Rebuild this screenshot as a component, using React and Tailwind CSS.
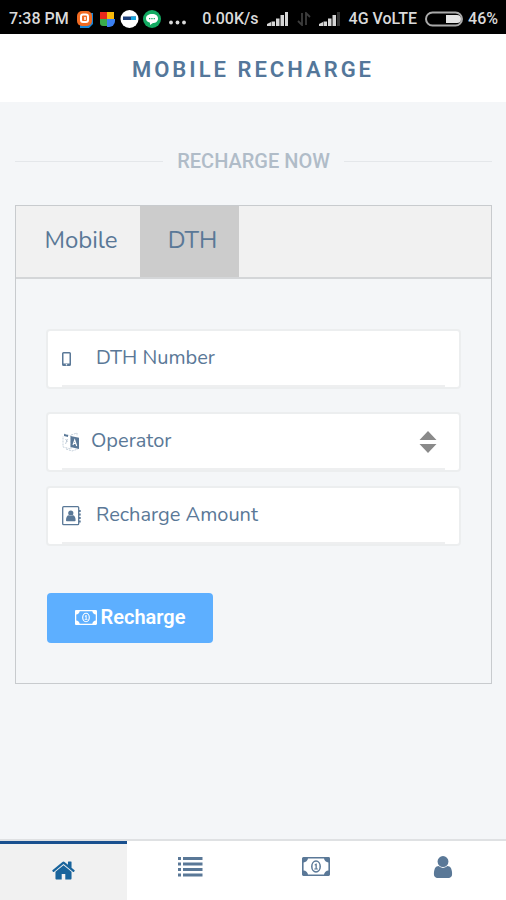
import React from "react";

const HomeIcon = () => (
  <svg viewBox="0 0 1792 1792" className="h-[25px] w-[25px] fill-current" aria-hidden="true">
    <path d="M1472 992v480q0 26-19 45t-45 19h-384v-384h-256v384h-384q-26 0-45-19t-19-45v-480q0-1 .5-3t.5-3l575-474 575 474q1 2 1 6zm223-69l-62 74q-8 9-21 11h-3q-13 0-21-7l-692-577-692 577q-12 8-24 7-13-2-21-11l-62-74q-8-10-7-23.5t11-21.5l719-599q32-26 76-26t76 26l244 204v-195q0-14 9-23t23-9h192q14 0 23 9t9 23v408l219 182q10 8 11 21.5t-7 23.5z" />
  </svg>
);

const ListIcon = () => (
  <svg viewBox="0 0 26 22" className="h-[22px] w-[26px] fill-current" aria-hidden="true">
    {[1, 6.5, 12, 17.5].map((y) => (
      <g key={y}>
        <rect x="1" y={y} width="3" height="3" />
        <rect x="6" y={y} width="19.5" height="3" />
      </g>
    ))}
  </svg>
);

const MoneyIcon = ({ className }) => (
  <svg viewBox="0 0 28 19" className={className} aria-hidden="true">
    <rect x="0.8" y="0.8" width="26.4" height="17.4" rx="0.6" fill="none" stroke="currentColor" strokeWidth="1.6" />
    <path d="M1 1h5a4.500 4.500 0 0 1-5 4.500zM27 1h-5a4.500 4.500 0 0 0 5 4.500zM1 18h5a4.500 4.500 0 0 0-5-4.500zM27 18h-5a4.500 4.500 0 0 1 5-4.500z" fill="currentColor" />
    <ellipse cx="14" cy="9.5" rx="4.2" ry="5.4" fill="none" stroke="currentColor" strokeWidth="1.500" />
    <path d="M12.400 7.700 14 6.400h.8v5.100h1.100v1h-3.600v-1h1.200V8.200l-.6.4z" fill="currentColor" />
  </svg>
);

const UserIcon = () => (
  <svg viewBox="192 64 1408 1664" className="h-6 w-5 fill-current" aria-hidden="true">
    <path d="M1536 1399q0 109-62.5 187t-150.5 78h-854q-88 0-150.5-78t-62.5-187q0-85 8.5-160.5t31.5-152 58.5-131 94-89 134.5-34.5q131 128 313 128t313-128q76 0 134.5 34.5t94 89 58.5 131 31.5 152 8.5 160.5zm-256-887q0 159-112.5 271.5t-271.5 112.5-271.5-112.5-112.5-271.5 112.5-271.5 271.5-112.5 271.5 112.5 112.5 271.5z" />
  </svg>
);

const PhoneIcon = () => (
  <svg viewBox="0 0 20 20" className="h-5 w-5" aria-hidden="true">
    <path fill="currentColor" fillRule="evenodd" d="M1.500 3h6A1.500 1.500 0 0 1 9 4.500v11A1.500 1.500 0 0 1 7.500 17h-6A1.500 1.500 0 0 1 0 15.500v-11A1.500 1.500 0 0 1 1.500 3zm0 1.500v10h6v-10zM4.500 15a.8.8 0 1 0 0 1.600.8.8 0 0 0 0-1.600z" />
  </svg>
);

const OperatorIcon = () => (
  <svg viewBox="0 0 20 20" className="h-5 w-5" aria-hidden="true">
    <path d="M2 2l7 2v13l-8-2V4M4 17l6 2 6-2M9 3l6-2v3" fill="none" stroke="currentColor" strokeWidth="0.7" strokeDasharray="2 1" opacity="0.5" />
    <path d="M2 2l4 1v2l-4-1z" fill="currentColor" />
    <path d="M3.500 7l2 3M5.500 7l-2 5" stroke="currentColor" strokeWidth="0.7" opacity="0.5" />
    <path d="M8.500 4l8.500 1.800V17l-8.500-2z" fill="currentColor" />
    <path d="M11 13l1.700-5 2 6M11.700 11.300l2.300.5" fill="none" stroke="#fff" strokeWidth="1.100" />
  </svg>
);

const AddressIcon = () => (
  <svg viewBox="0 0 20 20" className="h-5 w-5 fill-current" aria-hidden="true">
    <rect x="0.7" y="0.7" width="16" height="18" rx="1" fill="none" stroke="currentColor" strokeWidth="1.3" />
    <circle cx="8.800" cy="7" r="2.600" />
    <path d="M4 14.200c0-3 1-5 3-5 1 .8 2.600.8 3.600 0 2 0 3 2 3 5 0 .7-.5 1-1 1H5c-.5 0-1-.3-1-1z" />
    <path d="M17 4h1.700v2H17zM17 7.500h1.700v2H17zM17 11h1.700v2H17zM17 14.500h1.700v2H17z" />
  </svg>
);

const Signal = ({ weak }) => (
  <svg viewBox="0 0 22 15" className="h-[15px] w-[22px] shrink-0" fill="#d6d6d6" aria-hidden="true">
    <path d="M0 13l4-2v4H0zM4.500 10.500h3.500v4.500H4.500zM9 7.500h3.500V15H9zM13.500 4H17v11h-3.500z" />
    <rect x="18" y="1" width="3" height="14" fill={weak ? "#333" : "#d6d6d6"} />
  </svg>
);

const StatusBar = () => (
  <div className="flex h-[34px] items-center justify-between bg-black pt-[3px] pr-2 pl-[9px] text-base font-medium text-[#dadada]">
    <div className="flex items-center gap-2">
      <span className="whitespace-nowrap">7:38 PM</span>
      <svg viewBox="0 0 84 18" className="h-[18px] w-[84px]" aria-hidden="true">
        <path d="M3 3h13v11l-4 4H3z" fill="#1685d8" />
        <rect x="0" y="1" width="15" height="15" rx="5" fill="#f06b22" />
        <rect x="4" y="4.500" width="7" height="7.500" rx="2" fill="none" stroke="#fff" strokeWidth="2" />
        <path d="M8 7v3" stroke="#fff" strokeWidth="1.500" />
        <path d="M23 2h7v7h-7z" fill="#e8291c" />
        <path d="M30 2h7v7h-7z" fill="#f9b90a" />
        <path d="M23 9h7v7h-4a3 3 0 0 1-3-3z" fill="#3bab4b" />
        <path d="M30 9h8v2a6 6 0 0 1-6 6h-2z" fill="#3b80f2" />
        <circle cx="52.500" cy="9" r="9" fill="#fff" />
        <path d="M46 6.500h13v3.500H46z" fill="#1d3f7a" />
        <path d="M54 6.500h5v3.500h-5z" fill="#16a6e0" />
        <circle cx="75" cy="9" r="9" fill="#13aa62" />
        <path d="M75 4c4 0 6 2 6 4.700s-2.500 4.300-5 4.300l-3 2v-2.300c-2.500-.6-4-2-4-4.200C69 5.700 71.500 4 75 4z" fill="#fff" />
        <path d="M72 8.700h6" stroke="#13aa62" strokeWidth="1.300" strokeDasharray="1.300 1" />
      </svg>
      <svg viewBox="0 0 17 5" className="mt-2 h-[5px] w-[17px]" fill="#dadada" aria-hidden="true">
        <circle cx="2" cy="2.500" r="1.900" />
        <circle cx="8.500" cy="2.500" r="1.900" />
        <circle cx="15" cy="2.500" r="1.900" />
      </svg>
    </div>
    <div className="flex items-center gap-2">
      <span>0.00K/s</span>
      <Signal />
      <svg viewBox="0 0 14 14" className="h-3.5 w-3.5" fill="none" stroke="#3d3d3d" strokeWidth="1.800" aria-hidden="true">
        <path d="M5 1v12L1 9M9 13V1l4 4" />
      </svg>
      <Signal weak />
      <span className="whitespace-nowrap">4G VoLTE</span>
      <svg viewBox="0 0 39 16" className="h-4 w-[39px]" aria-hidden="true">
        <rect x="1" y="1.500" width="36" height="13" rx="6.500" fill="none" stroke="#aaa" strokeWidth="2" />
        <path d="M21 4h11a4 4 0 0 1 0 8H21z" fill="#e4e4e4" />
      </svg>
      <span className="-ml-1 text-base">46%</span>
    </div>
  </div>
);

const Field = ({ id, label, icon }) => (
  <div className="flex h-[60px] rounded-sm border-2 border-[#eceeef] bg-white px-[14px]">
    <label htmlFor={id} className="flex items-center" aria-label={label}>
      {icon}
    </label>
    <input
      id={id}
      type="text"
      placeholder={label}
      className="-ml-5 min-w-0 flex-1 border-b-2 border-[#eeeff0] bg-transparent pl-[34px] outline-none placeholder:text-[#5a7897] placeholder:opacity-100"
    />
  </div>
);

const NAV_ITEMS = [
  { label: "History", icon: <ListIcon /> },
  { label: "Wallet", icon: <MoneyIcon className="h-[19px] w-7" /> },
  { label: "Account", icon: <UserIcon /> },
];

const App = () => {
  return (
    <div className="flex min-h-screen flex-col bg-[#f4f6f8] font-['Roboto',sans-serif] text-[#5a7897]">
      <StatusBar />
      <header className="flex h-[68px] items-center justify-center bg-white pt-0.5">
        <h1 className="text-[22px] font-semibold tracking-[3px] text-[#54779a]">MOBILE RECHARGE</h1>
      </header>

      <main className="flex-1 pt-[45px] pr-[14px] pl-[15px]">
        <div className="flex items-center gap-[14px]">
          <span className="h-px flex-1 bg-[#e4e7ea]" />
          <h2 className="text-xl leading-7 font-medium text-[#b0bcc8]">RECHARGE NOW</h2>
          <span className="h-px flex-1 bg-[#e4e7ea]" />
        </div>

        <section className="mt-[30px] border border-[#c8cbce] font-['Nunito','Open_Sans',sans-serif]">
          {/* Tabs */}
          <div className="flex h-[73px] border-b-2 border-[#d4d6d8] bg-[#f1f1f1] text-2xl" role="tablist">
            <button type="button" role="tab" aria-selected="false" className="w-[124px] pb-1 pl-1.5">
              Mobile
            </button>
            <button type="button" role="tab" aria-selected="true" className="w-[99px] bg-[#ccc] pb-1 pl-1.5">
              DTH
            </button>
          </div>

          {/* Recharge form */}
          <form className="px-[30px] pt-[50px] pb-10 text-xl">
            <Field id="number" label="DTH Number" icon={<PhoneIcon />} />
            <div className="mt-[23px] mb-[14px] flex h-[60px] rounded-sm border-2 border-[#eceeef] bg-white px-[14px]">
              <label htmlFor="operator" className="flex items-center" aria-label="Operator">
                <OperatorIcon />
              </label>
              <div className="relative -ml-5 flex flex-1">
                <select
                  id="operator"
                  className="flex-1 appearance-none border-b-2 border-[#eeeff0] bg-transparent pl-[29px] text-[#5a7897] outline-none"
                >
                  <option>Operator</option>
                </select>
                <svg
                  viewBox="0 0 18 24"
                  className="pointer-events-none absolute top-4 right-2 h-6 w-[18px]"
                  fill="#8a8a8a"
                  aria-hidden="true"
                >
                  <path d="M9 1l8.500 9H.5zM.5 14h17L9 23z" />
                </svg>
              </div>
            </div>
            <Field id="amount" label="Recharge Amount" icon={<AddressIcon />} />

            <button
              type="submit"
              className="mt-[47px] ml-px flex h-[50px] w-[166px] items-center justify-center gap-1 rounded-sm bg-[#5dafff] pb-0.5 font-['Roboto',sans-serif] text-xl font-semibold text-white"
            >
              <MoneyIcon className="h-[15px] w-[22px]" />
              Recharge
            </button>
          </form>
        </section>
      </main>

      <nav className="grid h-[61px] grid-cols-4 border-t-2 border-[#dfe1e3] bg-white">
        <a href="#home" aria-label="Home" className="flex items-center justify-center border-t-3 border-[#19508f] bg-[#f1f1f1] pb-1 text-[#19649c]">
          <HomeIcon />
        </a>
        {NAV_ITEMS.map((item) => (
          <a key={item.label} href="#nav" aria-label={item.label} className="flex items-center justify-center pb-2">
            {item.icon}
          </a>
        ))}
      </nav>
    </div>
  );
};

export default App;
